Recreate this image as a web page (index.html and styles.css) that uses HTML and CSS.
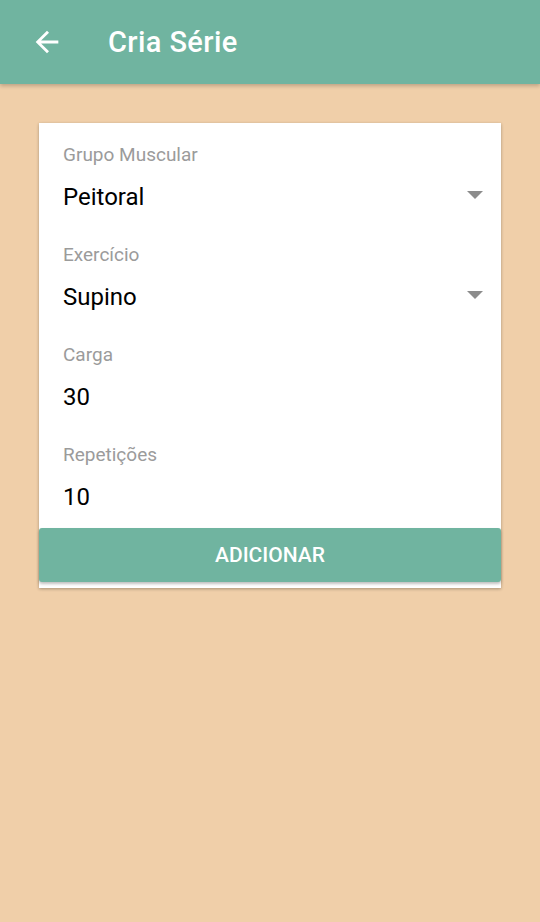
FILE: index.html
```html
<!DOCTYPE html>
<html lang="pt">
<head>
<meta charset="utf-8">
<title>Cria Série</title>
<link rel="stylesheet" href="styles.css">
</head>
<body>
<header class="appbar">
  <svg class="back" width="34" height="34" viewBox="0 0 24 24"><path d="M20 11H7.83l5.59-5.59L12 4l-8 8 8 8 1.41-1.41L7.83 13H20v-2z" fill="#fff"/></svg>
  <h1 class="title">Cria Série</h1>
</header>
<main class="content">
  <section class="card">
    <div class="fields">
      <div class="field">
        <div class="label">Grupo Muscular</div>
        <div class="value-row"><span class="value">Peitoral</span><span class="caret"></span></div>
      </div>
      <div class="field">
        <div class="label">Exercício</div>
        <div class="value-row"><span class="value">Supino</span><span class="caret"></span></div>
      </div>
      <div class="field">
        <div class="label">Carga</div>
        <div class="value-row"><span class="value">30</span></div>
      </div>
      <div class="field">
        <div class="label">Repetições</div>
        <div class="value-row"><span class="value">10</span></div>
      </div>
    </div>
    <button class="add">ADICIONAR</button>
  </section>
</main>
</body>
</html>
```
FILE: styles.css
```css
html, body {
  margin: 0;
  padding: 0;
}
body {
  background: #f0cfa9;
  font-family: Roboto, "Liberation Sans", sans-serif;
  min-height: 922px;
}
.appbar {
  height: 84px;
  background: #70b4a0;
  display: flex;
  align-items: center;
  padding-left: 30px;
  box-shadow: 0 2px 4px rgba(0,0,0,0.22);
  position: relative;
  z-index: 1;
}
.back {
  display: block;
  margin-top: -1px;
}
.title {
  margin: 0 0 0 44px;
  color: #fff;
  font-size: 29px;
  font-weight: 500;
  letter-spacing: 0.4px;
}
.content {
  padding: 39px 39px 0 39px;
}
.card {
  background: #fff;
  box-shadow: 0 1px 3px rgba(0,0,0,0.3);
  padding-bottom: 6px;
}
.fields {
  padding: 21px 18px 16px 24px;
  display: flex;
  flex-direction: column;
  gap: 32px;
}
.field {
  display: flex;
  flex-direction: column;
  gap: 16px;
}
.label {
  font-size: 19px;
  line-height: 22px;
  color: #9b9b9b;
}
.value-row {
  display: flex;
  align-items: center;
  justify-content: space-between;
  height: 30px;
}
.value {
  font-size: 24px;
  line-height: 30px;
  color: #000;
}
.caret {
  width: 0;
  height: 0;
  border-left: 8px solid transparent;
  border-right: 8px solid transparent;
  border-top: 8px solid #8c8c8c;
  margin-top: -4px;
}
.add {
  display: block;
  width: 100%;
  height: 54px;
  border: none;
  border-radius: 3px;
  background: #70b4a0;
  color: #fff;
  font-family: Roboto, "Liberation Sans", sans-serif;
  font-size: 21px;
  font-weight: 500;
  box-shadow: 0 2px 3px rgba(0,0,0,0.25);
  padding: 0;
}
```
